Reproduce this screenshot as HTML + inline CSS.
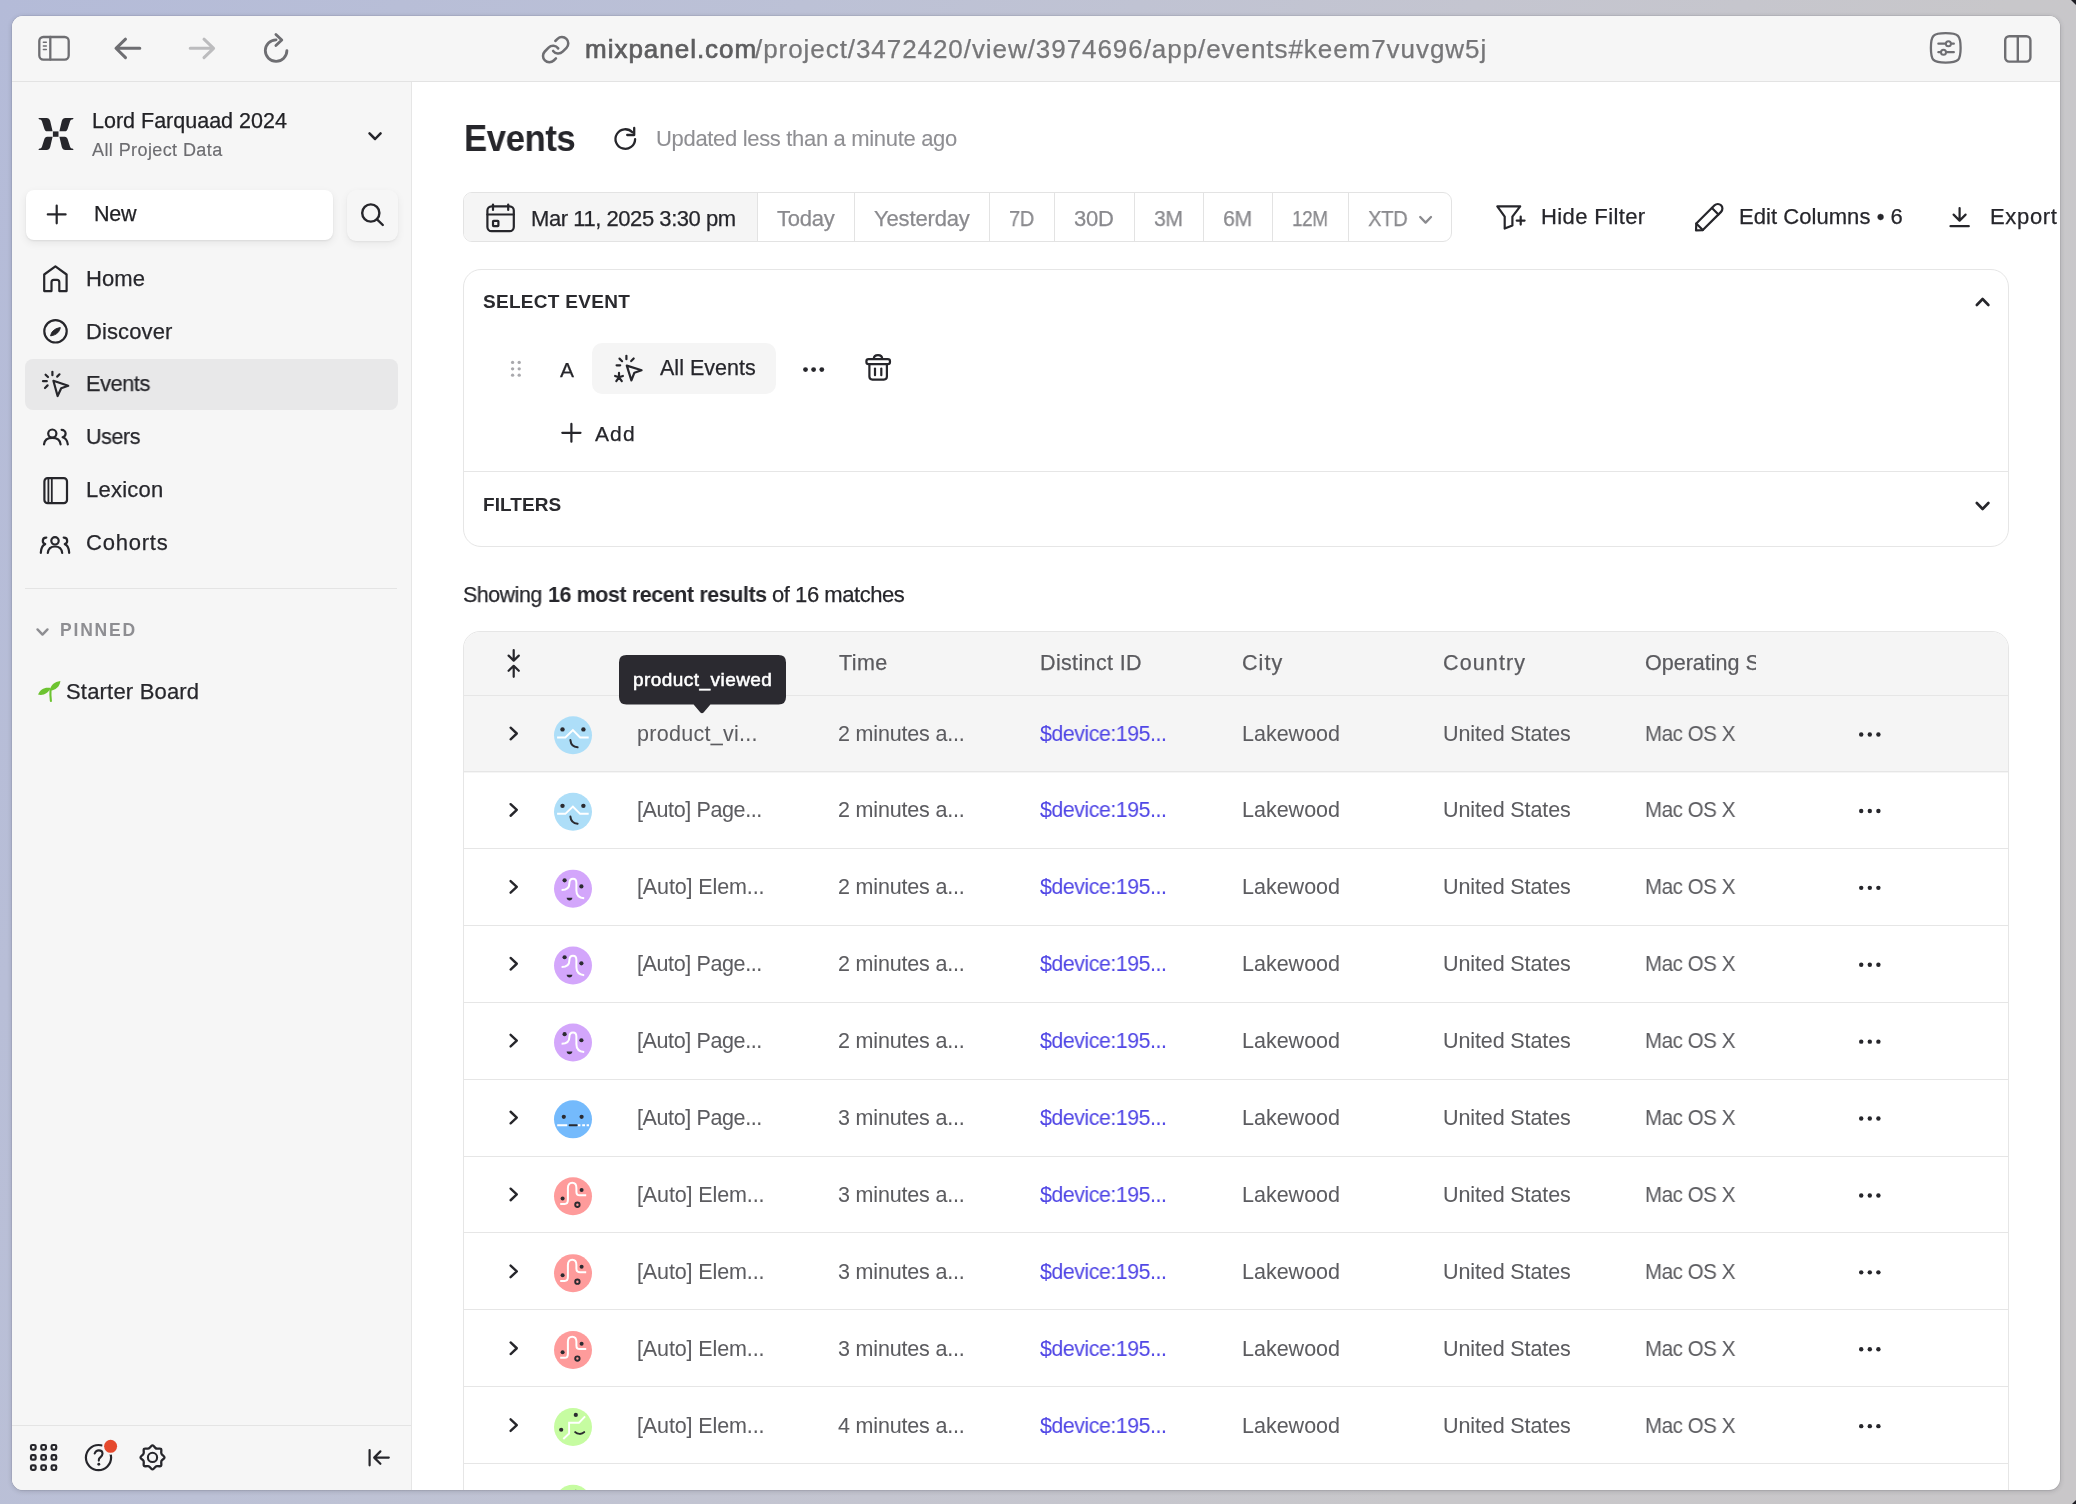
<!DOCTYPE html>
<html><head><meta charset="utf-8"><title>Events - Mixpanel</title>
<style>
html,body{margin:0;padding:0;}
body{width:2076px;height:1504px;position:relative;overflow:hidden;
 background:linear-gradient(112deg,#b4bbd8 0%,#bcc1d6 30%,#c4c5d0 55%,#c8c7ca 75%,#c9c7c9 100%);
 font-family:"Liberation Sans",sans-serif;}
.abs{position:absolute;}
.win{position:absolute;left:12px;top:16px;width:2048px;height:1474px;border-radius:11px;background:#fff;
 box-shadow:0 0 0 0.5px rgba(60,60,70,0.15),0 1px 5px rgba(40,40,50,0.22);}
.clip{position:absolute;left:0;top:0;width:2076px;height:1504px;clip-path:inset(16px 16px 14px 12px round 11px);}
.t{position:absolute;white-space:pre;line-height:1;font-family:"Liberation Sans",sans-serif;will-change:transform;}
svg{position:absolute;left:0;top:0;overflow:visible;}
</style></head><body>
<div class="win"></div>
<div class="clip">

<div class="abs" style="left:12px;top:16px;width:2048px;height:65px;background:#f6f6f6;"></div>
<div class="abs" style="left:12px;top:81px;width:2048px;height:1px;background:#e3e3e3;"></div>
<div class="abs" style="left:12px;top:82px;width:399px;height:1410px;background:#f6f6f6;"></div>
<div class="abs" style="left:411px;top:82px;width:1px;height:1410px;background:#e6e6e6;"></div>
<div class="abs" style="left:26px;top:189.5px;width:307px;height:50.5px;background:#fff;border-radius:8px;box-shadow:0 1px 2px rgba(0,0,0,0.07),0 3px 9px rgba(0,0,0,0.07);"></div>
<div class="abs" style="left:347px;top:189.5px;width:51px;height:51px;background:#f6f6f6;border-radius:9px;box-shadow:0 1px 2px rgba(0,0,0,0.05),0 3px 9px rgba(0,0,0,0.06);"></div>
<div class="abs" style="left:25px;top:359px;width:372.5px;height:50.5px;background:#e8e8e9;border-radius:8px;"></div>
<div class="abs" style="left:25px;top:588px;width:372px;height:1px;background:#e4e4e4;"></div>
<div class="abs" style="left:12px;top:1425px;width:399px;height:1px;background:#e4e4e4;"></div>
<div class="abs" style="left:463px;top:192px;width:987px;height:48px;border:1px solid #e3e3e3;border-radius:9px;background:#fff;overflow:hidden;"><div class="abs" style="left:0;top:0;width:294px;height:48px;background:#f5f5f5;"></div></div>
<div class="abs" style="left:756.8px;top:193px;width:1px;height:48px;background:#e3e3e3;"></div>
<div class="abs" style="left:854px;top:193px;width:1px;height:48px;background:#e3e3e3;"></div>
<div class="abs" style="left:989px;top:193px;width:1px;height:48px;background:#e3e3e3;"></div>
<div class="abs" style="left:1053.7px;top:193px;width:1px;height:48px;background:#e3e3e3;"></div>
<div class="abs" style="left:1133.9px;top:193px;width:1px;height:48px;background:#e3e3e3;"></div>
<div class="abs" style="left:1202.8px;top:193px;width:1px;height:48px;background:#e3e3e3;"></div>
<div class="abs" style="left:1271.9px;top:193px;width:1px;height:48px;background:#e3e3e3;"></div>
<div class="abs" style="left:1348px;top:193px;width:1px;height:48px;background:#e3e3e3;"></div>
<div class="abs" style="left:463px;top:269px;width:1544px;height:276px;border:1px solid #e6e6e6;border-radius:18px;background:#fff;"></div>
<div class="abs" style="left:464px;top:471px;width:1544px;height:1px;background:#e6e6e6;"></div>
<div class="abs" style="left:592.3px;top:343px;width:184.2px;height:50.7px;background:#f5f5f5;border-radius:10px;"></div>
<div class="abs" style="left:463px;top:631px;width:1544px;height:1000px;border:1px solid #e6e6e6;border-radius:17px 17px 0 0;background:#fff;overflow:hidden;"><div class="abs" style="left:0;top:0;width:1544px;height:64.5px;background:#f5f5f5;"></div><div class="abs" style="left:0;top:64.5px;width:1544px;height:76px;background:#f5f5f5;"></div></div>
<div class="abs" style="left:464px;top:695px;width:1544px;height:1px;background:#e6e6e6;"></div>
<div class="abs" style="left:464px;top:771px;width:1544px;height:1px;background:#e6e6e6;"></div>
<div class="abs" style="left:464px;top:847.9px;width:1544px;height:1px;background:#e6e6e6;"></div>
<div class="abs" style="left:464px;top:924.8px;width:1544px;height:1px;background:#e6e6e6;"></div>
<div class="abs" style="left:464px;top:1001.7px;width:1544px;height:1px;background:#e6e6e6;"></div>
<div class="abs" style="left:464px;top:1078.6px;width:1544px;height:1px;background:#e6e6e6;"></div>
<div class="abs" style="left:464px;top:1155.5px;width:1544px;height:1px;background:#e6e6e6;"></div>
<div class="abs" style="left:464px;top:1232.4px;width:1544px;height:1px;background:#e6e6e6;"></div>
<div class="abs" style="left:464px;top:1309.3px;width:1544px;height:1px;background:#e6e6e6;"></div>
<div class="abs" style="left:464px;top:1386.2px;width:1544px;height:1px;background:#e6e6e6;"></div>
<div class="abs" style="left:464px;top:1463.1px;width:1544px;height:1px;background:#e6e6e6;"></div>
<div class="abs" style="left:464px;top:1540px;width:1544px;height:1px;background:#e6e6e6;"></div>
<div class="t" style="left:585.3px;top:36.39px;font-size:26px;color:#5d5d5f;letter-spacing:0.981px;-webkit-text-stroke:0.7px #5d5d5f;">mixpanel.com</div><div class="t" style="left:755.3px;top:36.39px;font-size:26px;color:#767678;letter-spacing:0.941px;-webkit-text-stroke:0.25px #767678;">/project/3472420/view/3974696/app/events#keem7vuvgw5j</div><div class="t" style="left:92.3px;top:111.1px;font-size:21.5px;color:#222226;-webkit-text-stroke:0.25px #222226;">Lord Farquaad 2024</div><div class="t" style="left:91.8px;top:140.76px;font-size:18px;color:#6c6c70;letter-spacing:0.409px;-webkit-text-stroke:0.15px #6c6c70;">All Project Data</div><div class="t" style="left:94px;top:204.2px;font-size:21.5px;color:#222226;letter-spacing:-0.258px;-webkit-text-stroke:0.25px #222226;">New</div><div class="t" style="left:86.3px;top:267.78px;font-size:22px;color:#27272c;letter-spacing:0.104px;-webkit-text-stroke:0.25px #27272c;">Home</div><div class="t" style="left:86.3px;top:320.58px;font-size:22px;color:#27272c;letter-spacing:0.103px;-webkit-text-stroke:0.25px #27272c;">Discover</div><div class="t" style="left:86.3px;top:373.48px;font-size:22px;color:#27272c;letter-spacing:-0.450px;transform:scaleX(0.9905);transform-origin:0 0;-webkit-text-stroke:0.25px #27272c;">Events</div><div class="t" style="left:86.3px;top:426.48px;font-size:22px;color:#27272c;letter-spacing:-0.450px;transform:scaleX(0.9775);transform-origin:0 0;-webkit-text-stroke:0.25px #27272c;">Users</div><div class="t" style="left:86.3px;top:478.98px;font-size:22px;color:#27272c;letter-spacing:0.243px;-webkit-text-stroke:0.25px #27272c;">Lexicon</div><div class="t" style="left:86.3px;top:531.78px;font-size:22px;color:#27272c;letter-spacing:0.776px;-webkit-text-stroke:0.25px #27272c;">Cohorts</div><div class="t" style="left:60.3px;top:621.59px;font-size:17.5px;color:#8e8e92;font-weight:700;letter-spacing:1.815px;">PINNED</div><div class="t" style="left:66px;top:680.78px;font-size:22px;color:#27272c;letter-spacing:0.188px;-webkit-text-stroke:0.25px #27272c;">Starter Board</div><div class="t" style="left:464.3px;top:121.33px;font-size:36px;color:#26262b;font-weight:700;letter-spacing:-0.450px;transform:scaleX(0.9645);transform-origin:0 0;">Events</div><div class="t" style="left:656.3px;top:128.38px;font-size:22px;color:#8f8f93;letter-spacing:-0.326px;-webkit-text-stroke:0.1px #8f8f93;">Updated less than a minute ago</div><div class="t" style="left:531.3px;top:208.28px;font-size:22px;color:#26262b;letter-spacing:-0.443px;-webkit-text-stroke:0.25px #26262b;">Mar 11, 2025 3:30 pm</div><div class="t" style="left:776.7px;top:207.58px;font-size:22px;color:#8a8a8e;letter-spacing:-0.230px;-webkit-text-stroke:0.25px #8a8a8e;">Today</div><div class="t" style="left:873.9px;top:207.58px;font-size:22px;color:#8a8a8e;letter-spacing:-0.156px;-webkit-text-stroke:0.25px #8a8a8e;">Yesterday</div><div class="t" style="left:1008.7px;top:207.58px;font-size:22px;color:#8a8a8e;letter-spacing:-0.450px;transform:scaleX(0.9142);transform-origin:0 0;-webkit-text-stroke:0.25px #8a8a8e;">7D</div><div class="t" style="left:1074.3px;top:207.58px;font-size:22px;color:#8a8a8e;letter-spacing:-0.230px;-webkit-text-stroke:0.25px #8a8a8e;">30D</div><div class="t" style="left:1154.3px;top:207.58px;font-size:22px;color:#8a8a8e;letter-spacing:-0.450px;transform:scaleX(0.9631);transform-origin:0 0;-webkit-text-stroke:0.25px #8a8a8e;">3M</div><div class="t" style="left:1223px;top:207.58px;font-size:22px;color:#8a8a8e;letter-spacing:-0.450px;transform:scaleX(0.9697);transform-origin:0 0;-webkit-text-stroke:0.25px #8a8a8e;">6M</div><div class="t" style="left:1291.9px;top:207.58px;font-size:22px;color:#8a8a8e;letter-spacing:-0.450px;transform:scaleX(0.8616);transform-origin:0 0;-webkit-text-stroke:0.25px #8a8a8e;">12M</div><div class="t" style="left:1368.3px;top:207.58px;font-size:22px;color:#8a8a8e;letter-spacing:-0.450px;transform:scaleX(0.9211);transform-origin:0 0;-webkit-text-stroke:0.25px #8a8a8e;">XTD</div><div class="t" style="left:1540.8px;top:206.18px;font-size:22px;color:#26262b;letter-spacing:0.395px;-webkit-text-stroke:0.25px #26262b;">Hide Filter</div><div class="t" style="left:1739.3px;top:206.18px;font-size:22px;color:#26262b;letter-spacing:0.053px;-webkit-text-stroke:0.25px #26262b;">Edit Columns • 6</div><div class="t" style="left:1990.3px;top:206.18px;font-size:22px;color:#26262b;letter-spacing:0.661px;-webkit-text-stroke:0.25px #26262b;">Export</div><div class="t" style="left:483.3px;top:291.72px;font-size:19px;color:#2a2a2e;font-weight:700;letter-spacing:0.293px;">SELECT EVENT</div><div class="t" style="left:483.3px;top:494.82px;font-size:19px;color:#2a2a2e;font-weight:700;letter-spacing:0.072px;">FILTERS</div><div class="t" style="left:559.5px;top:358.62px;font-size:21px;color:#26262b;-webkit-text-stroke:0.25px #26262b;">A</div><div class="t" style="left:660.3px;top:358.2px;font-size:21.5px;color:#26262b;letter-spacing:0.021px;-webkit-text-stroke:0.25px #26262b;">All Events</div><div class="t" style="left:595.3px;top:422.82px;font-size:21px;color:#26262b;letter-spacing:1.113px;-webkit-text-stroke:0.25px #26262b;">Add</div><div class="t" style="left:463px;top:583.58px;font-size:22px;color:#26262b;letter-spacing:-0.450px;transform:scaleX(0.9695);transform-origin:0 0;-webkit-text-stroke:0.25px #26262b;">Showing</div><div class="t" style="left:548.3px;top:583.58px;font-size:22px;color:#26262b;font-weight:700;letter-spacing:-0.450px;transform:scaleX(0.9781);transform-origin:0 0;">16 most recent results</div><div class="t" style="left:772.3px;top:583.58px;font-size:22px;color:#26262b;letter-spacing:-0.450px;-webkit-text-stroke:0.25px #26262b;">of 16 matches</div><div class="t" style="left:838.9px;top:653.4px;font-size:21.5px;color:#5b5b5f;letter-spacing:0.405px;-webkit-text-stroke:0.25px #5b5b5f;">Time</div><div class="t" style="left:1040.3px;top:653.4px;font-size:21.5px;color:#5b5b5f;letter-spacing:0.353px;-webkit-text-stroke:0.25px #5b5b5f;">Distinct ID</div><div class="t" style="left:1241.7px;top:653.4px;font-size:21.5px;color:#5b5b5f;letter-spacing:1.056px;-webkit-text-stroke:0.25px #5b5b5f;">City</div><div class="t" style="left:1443.2px;top:653.4px;font-size:21.5px;color:#5b5b5f;letter-spacing:1.134px;-webkit-text-stroke:0.25px #5b5b5f;">Country</div><div class="t" style="left:1645.3px;top:653.4px;font-size:21.5px;color:#5b5b5f;-webkit-text-stroke:0.25px #5b5b5f;clip-path:inset(-10px 0 -10px 0);width:111px;overflow:hidden;">Operating System</div><div class="t" style="left:637px;top:724px;font-size:21.5px;color:#5c5c60;letter-spacing:0.281px;-webkit-text-stroke:0.05px #5c5c60;">product_vi...</div><div class="t" style="left:838.1px;top:724px;font-size:21.5px;color:#5c5c60;letter-spacing:-0.175px;-webkit-text-stroke:0.05px #5c5c60;">2 minutes a...</div><div class="t" style="left:1040.3px;top:724px;font-size:21.5px;color:#5046e5;letter-spacing:-0.450px;transform:scaleX(0.9912);transform-origin:0 0;-webkit-text-stroke:0.05px #5046e5;">$device:195...</div><div class="t" style="left:1241.7px;top:724px;font-size:21.5px;color:#5c5c60;-webkit-text-stroke:0.05px #5c5c60;">Lakewood</div><div class="t" style="left:1443.2px;top:724px;font-size:21.5px;color:#5c5c60;letter-spacing:-0.107px;-webkit-text-stroke:0.05px #5c5c60;">United States</div><div class="t" style="left:1645.3px;top:724px;font-size:21.5px;color:#5c5c60;letter-spacing:-0.450px;transform:scaleX(0.9534);transform-origin:0 0;-webkit-text-stroke:0.05px #5c5c60;">Mac OS X</div><div class="t" style="left:637px;top:800.45px;font-size:21.5px;color:#5c5c60;letter-spacing:-0.383px;-webkit-text-stroke:0.05px #5c5c60;">[Auto] Page...</div><div class="t" style="left:838.1px;top:800.45px;font-size:21.5px;color:#5c5c60;letter-spacing:-0.175px;-webkit-text-stroke:0.05px #5c5c60;">2 minutes a...</div><div class="t" style="left:1040.3px;top:800.45px;font-size:21.5px;color:#5046e5;letter-spacing:-0.450px;transform:scaleX(0.9912);transform-origin:0 0;-webkit-text-stroke:0.05px #5046e5;">$device:195...</div><div class="t" style="left:1241.7px;top:800.45px;font-size:21.5px;color:#5c5c60;-webkit-text-stroke:0.05px #5c5c60;">Lakewood</div><div class="t" style="left:1443.2px;top:800.45px;font-size:21.5px;color:#5c5c60;letter-spacing:-0.107px;-webkit-text-stroke:0.05px #5c5c60;">United States</div><div class="t" style="left:1645.3px;top:800.45px;font-size:21.5px;color:#5c5c60;letter-spacing:-0.450px;transform:scaleX(0.9534);transform-origin:0 0;-webkit-text-stroke:0.05px #5c5c60;">Mac OS X</div><div class="t" style="left:637px;top:877.35px;font-size:21.5px;color:#5c5c60;letter-spacing:-0.120px;-webkit-text-stroke:0.05px #5c5c60;">[Auto] Elem...</div><div class="t" style="left:838.1px;top:877.35px;font-size:21.5px;color:#5c5c60;letter-spacing:-0.175px;-webkit-text-stroke:0.05px #5c5c60;">2 minutes a...</div><div class="t" style="left:1040.3px;top:877.35px;font-size:21.5px;color:#5046e5;letter-spacing:-0.450px;transform:scaleX(0.9912);transform-origin:0 0;-webkit-text-stroke:0.05px #5046e5;">$device:195...</div><div class="t" style="left:1241.7px;top:877.35px;font-size:21.5px;color:#5c5c60;-webkit-text-stroke:0.05px #5c5c60;">Lakewood</div><div class="t" style="left:1443.2px;top:877.35px;font-size:21.5px;color:#5c5c60;letter-spacing:-0.107px;-webkit-text-stroke:0.05px #5c5c60;">United States</div><div class="t" style="left:1645.3px;top:877.35px;font-size:21.5px;color:#5c5c60;letter-spacing:-0.450px;transform:scaleX(0.9534);transform-origin:0 0;-webkit-text-stroke:0.05px #5c5c60;">Mac OS X</div><div class="t" style="left:637px;top:954.25px;font-size:21.5px;color:#5c5c60;letter-spacing:-0.383px;-webkit-text-stroke:0.05px #5c5c60;">[Auto] Page...</div><div class="t" style="left:838.1px;top:954.25px;font-size:21.5px;color:#5c5c60;letter-spacing:-0.175px;-webkit-text-stroke:0.05px #5c5c60;">2 minutes a...</div><div class="t" style="left:1040.3px;top:954.25px;font-size:21.5px;color:#5046e5;letter-spacing:-0.450px;transform:scaleX(0.9912);transform-origin:0 0;-webkit-text-stroke:0.05px #5046e5;">$device:195...</div><div class="t" style="left:1241.7px;top:954.25px;font-size:21.5px;color:#5c5c60;-webkit-text-stroke:0.05px #5c5c60;">Lakewood</div><div class="t" style="left:1443.2px;top:954.25px;font-size:21.5px;color:#5c5c60;letter-spacing:-0.107px;-webkit-text-stroke:0.05px #5c5c60;">United States</div><div class="t" style="left:1645.3px;top:954.25px;font-size:21.5px;color:#5c5c60;letter-spacing:-0.450px;transform:scaleX(0.9534);transform-origin:0 0;-webkit-text-stroke:0.05px #5c5c60;">Mac OS X</div><div class="t" style="left:637px;top:1031.15px;font-size:21.5px;color:#5c5c60;letter-spacing:-0.383px;-webkit-text-stroke:0.05px #5c5c60;">[Auto] Page...</div><div class="t" style="left:838.1px;top:1031.15px;font-size:21.5px;color:#5c5c60;letter-spacing:-0.175px;-webkit-text-stroke:0.05px #5c5c60;">2 minutes a...</div><div class="t" style="left:1040.3px;top:1031.15px;font-size:21.5px;color:#5046e5;letter-spacing:-0.450px;transform:scaleX(0.9912);transform-origin:0 0;-webkit-text-stroke:0.05px #5046e5;">$device:195...</div><div class="t" style="left:1241.7px;top:1031.15px;font-size:21.5px;color:#5c5c60;-webkit-text-stroke:0.05px #5c5c60;">Lakewood</div><div class="t" style="left:1443.2px;top:1031.15px;font-size:21.5px;color:#5c5c60;letter-spacing:-0.107px;-webkit-text-stroke:0.05px #5c5c60;">United States</div><div class="t" style="left:1645.3px;top:1031.15px;font-size:21.5px;color:#5c5c60;letter-spacing:-0.450px;transform:scaleX(0.9534);transform-origin:0 0;-webkit-text-stroke:0.05px #5c5c60;">Mac OS X</div><div class="t" style="left:637px;top:1108.05px;font-size:21.5px;color:#5c5c60;letter-spacing:-0.383px;-webkit-text-stroke:0.05px #5c5c60;">[Auto] Page...</div><div class="t" style="left:838.1px;top:1108.05px;font-size:21.5px;color:#5c5c60;letter-spacing:-0.175px;-webkit-text-stroke:0.05px #5c5c60;">3 minutes a...</div><div class="t" style="left:1040.3px;top:1108.05px;font-size:21.5px;color:#5046e5;letter-spacing:-0.450px;transform:scaleX(0.9912);transform-origin:0 0;-webkit-text-stroke:0.05px #5046e5;">$device:195...</div><div class="t" style="left:1241.7px;top:1108.05px;font-size:21.5px;color:#5c5c60;-webkit-text-stroke:0.05px #5c5c60;">Lakewood</div><div class="t" style="left:1443.2px;top:1108.05px;font-size:21.5px;color:#5c5c60;letter-spacing:-0.107px;-webkit-text-stroke:0.05px #5c5c60;">United States</div><div class="t" style="left:1645.3px;top:1108.05px;font-size:21.5px;color:#5c5c60;letter-spacing:-0.450px;transform:scaleX(0.9534);transform-origin:0 0;-webkit-text-stroke:0.05px #5c5c60;">Mac OS X</div><div class="t" style="left:637px;top:1184.95px;font-size:21.5px;color:#5c5c60;letter-spacing:-0.120px;-webkit-text-stroke:0.05px #5c5c60;">[Auto] Elem...</div><div class="t" style="left:838.1px;top:1184.95px;font-size:21.5px;color:#5c5c60;letter-spacing:-0.175px;-webkit-text-stroke:0.05px #5c5c60;">3 minutes a...</div><div class="t" style="left:1040.3px;top:1184.95px;font-size:21.5px;color:#5046e5;letter-spacing:-0.450px;transform:scaleX(0.9912);transform-origin:0 0;-webkit-text-stroke:0.05px #5046e5;">$device:195...</div><div class="t" style="left:1241.7px;top:1184.95px;font-size:21.5px;color:#5c5c60;-webkit-text-stroke:0.05px #5c5c60;">Lakewood</div><div class="t" style="left:1443.2px;top:1184.95px;font-size:21.5px;color:#5c5c60;letter-spacing:-0.107px;-webkit-text-stroke:0.05px #5c5c60;">United States</div><div class="t" style="left:1645.3px;top:1184.95px;font-size:21.5px;color:#5c5c60;letter-spacing:-0.450px;transform:scaleX(0.9534);transform-origin:0 0;-webkit-text-stroke:0.05px #5c5c60;">Mac OS X</div><div class="t" style="left:637px;top:1261.85px;font-size:21.5px;color:#5c5c60;letter-spacing:-0.120px;-webkit-text-stroke:0.05px #5c5c60;">[Auto] Elem...</div><div class="t" style="left:838.1px;top:1261.85px;font-size:21.5px;color:#5c5c60;letter-spacing:-0.175px;-webkit-text-stroke:0.05px #5c5c60;">3 minutes a...</div><div class="t" style="left:1040.3px;top:1261.85px;font-size:21.5px;color:#5046e5;letter-spacing:-0.450px;transform:scaleX(0.9912);transform-origin:0 0;-webkit-text-stroke:0.05px #5046e5;">$device:195...</div><div class="t" style="left:1241.7px;top:1261.85px;font-size:21.5px;color:#5c5c60;-webkit-text-stroke:0.05px #5c5c60;">Lakewood</div><div class="t" style="left:1443.2px;top:1261.85px;font-size:21.5px;color:#5c5c60;letter-spacing:-0.107px;-webkit-text-stroke:0.05px #5c5c60;">United States</div><div class="t" style="left:1645.3px;top:1261.85px;font-size:21.5px;color:#5c5c60;letter-spacing:-0.450px;transform:scaleX(0.9534);transform-origin:0 0;-webkit-text-stroke:0.05px #5c5c60;">Mac OS X</div><div class="t" style="left:637px;top:1338.75px;font-size:21.5px;color:#5c5c60;letter-spacing:-0.120px;-webkit-text-stroke:0.05px #5c5c60;">[Auto] Elem...</div><div class="t" style="left:838.1px;top:1338.75px;font-size:21.5px;color:#5c5c60;letter-spacing:-0.175px;-webkit-text-stroke:0.05px #5c5c60;">3 minutes a...</div><div class="t" style="left:1040.3px;top:1338.75px;font-size:21.5px;color:#5046e5;letter-spacing:-0.450px;transform:scaleX(0.9912);transform-origin:0 0;-webkit-text-stroke:0.05px #5046e5;">$device:195...</div><div class="t" style="left:1241.7px;top:1338.75px;font-size:21.5px;color:#5c5c60;-webkit-text-stroke:0.05px #5c5c60;">Lakewood</div><div class="t" style="left:1443.2px;top:1338.75px;font-size:21.5px;color:#5c5c60;letter-spacing:-0.107px;-webkit-text-stroke:0.05px #5c5c60;">United States</div><div class="t" style="left:1645.3px;top:1338.75px;font-size:21.5px;color:#5c5c60;letter-spacing:-0.450px;transform:scaleX(0.9534);transform-origin:0 0;-webkit-text-stroke:0.05px #5c5c60;">Mac OS X</div><div class="t" style="left:637px;top:1415.65px;font-size:21.5px;color:#5c5c60;letter-spacing:-0.120px;-webkit-text-stroke:0.05px #5c5c60;">[Auto] Elem...</div><div class="t" style="left:838.1px;top:1415.65px;font-size:21.5px;color:#5c5c60;letter-spacing:-0.175px;-webkit-text-stroke:0.05px #5c5c60;">4 minutes a...</div><div class="t" style="left:1040.3px;top:1415.65px;font-size:21.5px;color:#5046e5;letter-spacing:-0.450px;transform:scaleX(0.9912);transform-origin:0 0;-webkit-text-stroke:0.05px #5046e5;">$device:195...</div><div class="t" style="left:1241.7px;top:1415.65px;font-size:21.5px;color:#5c5c60;-webkit-text-stroke:0.05px #5c5c60;">Lakewood</div><div class="t" style="left:1443.2px;top:1415.65px;font-size:21.5px;color:#5c5c60;letter-spacing:-0.107px;-webkit-text-stroke:0.05px #5c5c60;">United States</div><div class="t" style="left:1645.3px;top:1415.65px;font-size:21.5px;color:#5c5c60;letter-spacing:-0.450px;transform:scaleX(0.9534);transform-origin:0 0;-webkit-text-stroke:0.05px #5c5c60;">Mac OS X</div><div class="t" style="left:637px;top:1492.55px;font-size:21.5px;color:#5c5c60;letter-spacing:-0.120px;-webkit-text-stroke:0.05px #5c5c60;">[Auto] Elem...</div><div class="t" style="left:838.1px;top:1492.55px;font-size:21.5px;color:#5c5c60;letter-spacing:-0.175px;-webkit-text-stroke:0.05px #5c5c60;">4 minutes a...</div><div class="t" style="left:1040.3px;top:1492.55px;font-size:21.5px;color:#5046e5;letter-spacing:-0.450px;transform:scaleX(0.9912);transform-origin:0 0;-webkit-text-stroke:0.05px #5046e5;">$device:195...</div><div class="t" style="left:1241.7px;top:1492.55px;font-size:21.5px;color:#5c5c60;-webkit-text-stroke:0.05px #5c5c60;">Lakewood</div><div class="t" style="left:1443.2px;top:1492.55px;font-size:21.5px;color:#5c5c60;letter-spacing:-0.107px;-webkit-text-stroke:0.05px #5c5c60;">United States</div><div class="t" style="left:1645.3px;top:1492.55px;font-size:21.5px;color:#5c5c60;letter-spacing:-0.450px;transform:scaleX(0.9534);transform-origin:0 0;-webkit-text-stroke:0.05px #5c5c60;">Mac OS X</div>
<svg width="2076" height="1504" viewBox="0 0 2076 1504"><g fill="none" stroke="#6e6e72" stroke-width="2.3" stroke-linecap="round" stroke-linejoin="round"><rect x="39.3" y="37" width="29.4" height="22.6" rx="4"/><line x1="50.3" y1="37" x2="50.3" y2="59.6"/></g><g stroke="#6e6e72" stroke-width="1.5" stroke-linecap="round"><line x1="43.4" y1="42.2" x2="46.3" y2="42.2"/><line x1="43.4" y1="45.9" x2="46.3" y2="45.9"/><line x1="43.4" y1="49.5" x2="46.3" y2="49.5"/></g><path d="M125.5 39.2 L116 48.3 L125.5 57.6 M116.5 48.3 L139.8 48.3" fill="none" stroke="#6e6e72" stroke-width="3" stroke-linecap="round" stroke-linejoin="round"/><path d="M204 39.2 L213.6 48.3 L204 57.6 M190.2 48.3 L213 48.3" fill="none" stroke="#bcbcbe" stroke-width="3" stroke-linecap="round" stroke-linejoin="round"/><path d="M276.1 39.8 A10.8 10.8 0 1 0 286.9 50.6" fill="none" stroke="#6e6e72" stroke-width="2.8" stroke-linecap="round"/><path d="M275.9 34.4 L281.8 40.1 L275.9 45.6" fill="none" stroke="#6e6e72" stroke-width="2.8" stroke-linecap="round" stroke-linejoin="round"/><g transform="translate(540.4 34.4) scale(1.27)" fill="none" stroke="#6e6e72" stroke-width="2" stroke-linecap="round" stroke-linejoin="round"><path d="M10 13a5 5 0 0 0 7.54.54l3-3a5 5 0 0 0-7.07-7.07l-1.72 1.71"/><path d="M14 11a5 5 0 0 0-7.54-.54l-3 3a5 5 0 0 0 7.07 7.07l1.71-1.71"/></g><g fill="none" stroke="#6e6e72" stroke-width="2.3" stroke-linecap="round"><path d="M1945.7 33.2 C1958.5 33.2 1960.6 35.5 1960.6 47.9 C1960.6 60.3 1958.5 62.6 1945.7 62.6 C1932.9 62.6 1930.9 60.3 1930.9 47.9 C1930.9 35.5 1932.9 33.2 1945.7 33.2 Z"/><line x1="1938.4" y1="43.7" x2="1953.8" y2="43.7"/><line x1="1938.4" y1="52.2" x2="1953.8" y2="52.2"/></g><circle cx="1948.4" cy="43.7" r="2.5" fill="#f6f6f6" stroke="#6e6e72" stroke-width="2"/><circle cx="1943.5" cy="52.2" r="2.5" fill="#f6f6f6" stroke="#6e6e72" stroke-width="2"/><g fill="none" stroke="#6e6e72" stroke-width="2.4"><rect x="2005.2" y="36.2" width="25.2" height="25.4" rx="4"/><line x1="2017.8" y1="36.2" x2="2017.8" y2="61.6"/></g><g transform="translate(34 112)"><path transform="" d="M4.3 6 L12.6 6 C14.5 6 15.6 7.2 16.2 9 L18.6 19.3 L13.3 19.3 C11.7 19.3 10.8 18.3 10.3 16.7 L8 9.4 C7.5 7.9 6.8 7.4 5.4 7.4 Z" fill="#26262b"/><path transform="translate(44 0) scale(-1 1)" d="M4.3 6 L12.6 6 C14.5 6 15.6 7.2 16.2 9 L18.6 19.3 L13.3 19.3 C11.7 19.3 10.8 18.3 10.3 16.7 L8 9.4 C7.5 7.9 6.8 7.4 5.4 7.4 Z" fill="#26262b"/><path transform="translate(0 44) scale(1 -1)" d="M4.3 6 L12.6 6 C14.5 6 15.6 7.2 16.2 9 L18.6 19.3 L13.3 19.3 C11.7 19.3 10.8 18.3 10.3 16.7 L8 9.4 C7.5 7.9 6.8 7.4 5.4 7.4 Z" fill="#26262b"/><path transform="translate(44 44) scale(-1 -1)" d="M4.3 6 L12.6 6 C14.5 6 15.6 7.2 16.2 9 L18.6 19.3 L13.3 19.3 C11.7 19.3 10.8 18.3 10.3 16.7 L8 9.4 C7.5 7.9 6.8 7.4 5.4 7.4 Z" fill="#26262b"/><rect x="18.9" y="19.4" width="5.6" height="5.4" fill="#26262b"/></g><path d="M369.5 133.3 L375.1 139 L380.6 133.3" fill="none" stroke="#26262b" stroke-width="2.5" stroke-linecap="round" stroke-linejoin="round"/><path d="M47.8 214.4 L65.6 214.4 M56.7 205.6 L56.7 223.3" stroke="#26262b" stroke-width="2.2" stroke-linecap="round"/><g fill="none" stroke="#26262b" stroke-width="2.4" stroke-linecap="round"><circle cx="370.8" cy="213" r="8.6"/><line x1="377" y1="219.3" x2="382.8" y2="225"/></g><path fill="none" stroke="#26262b" stroke-width="2.2" stroke-linecap="round" stroke-linejoin="round" d="M44.2 291.1 L44.2 274.5 L55.4 266.4 L66.6 274.5 L66.6 291.1 L59.3 291.1 L59.3 282.3 C59.3 280.6 58.4 279.9 57 279.9 L53.8 279.9 C52.4 279.9 51.5 280.6 51.5 282.3 L51.5 291.1 Z"/><circle fill="none" stroke="#26262b" stroke-width="2.2" stroke-linecap="round" stroke-linejoin="round" cx="55.5" cy="331.3" r="11.2"/><path d="M50.6 335.9 C51.4 332 53.6 328.8 60.3 327.6 C59.5 331.5 57.3 334.7 50.6 335.9 Z" fill="#26262b" stroke="#26262b" stroke-width="1"/><g fill="none" stroke="#26262b" stroke-width="2.2" stroke-linecap="round" stroke-linejoin="round"><line x1="52.4" y1="371.8" x2="52.4" y2="375.2"/><line x1="45.6" y1="374.7" x2="48" y2="377"/><line x1="59.5" y1="374.3" x2="57.2" y2="376.6"/><line x1="43" y1="381.2" x2="46.8" y2="381.2"/><line x1="45" y1="388" x2="47.6" y2="385.4"/><path d="M53.4 380.8 L68.2 385.8 L61.2 388.3 L57.6 396 Z"/></g><g fill="none" stroke="#26262b" stroke-width="2.2" stroke-linecap="round" stroke-linejoin="round"><circle cx="52.3" cy="433.6" r="4.1"/><path d="M44 444.3 C44.6 439.8 47.9 437.9 52.3 437.9 C56.7 437.9 60 439.8 60.6 444.3"/><path d="M61.6 429.8 C64 429.8 65.6 431.5 65.6 433.6 C65.6 435.3 64.3 436.8 62.6 437.3 C65.5 438.2 67.3 440.6 67.8 444.3"/></g><g fill="none" stroke="#26262b" stroke-width="2.2" stroke-linecap="round" stroke-linejoin="round"><rect x="44.4" y="478.2" width="22.6" height="25" rx="3.2"/><line x1="48.4" y1="478.6" x2="48.4" y2="502.8" stroke-width="1.8"/><line x1="51.8" y1="478.6" x2="51.8" y2="502.8" stroke-width="1.8"/></g><g fill="none" stroke="#26262b" stroke-width="2.2" stroke-linecap="round" stroke-linejoin="round" stroke-width="2"><circle cx="55" cy="540.8" r="3.7"/><path d="M47.8 553 C48.3 548.5 51.2 546.5 55 546.5 C58.8 546.5 61.7 548.5 62.2 553"/><path d="M63.7 537.6 C65.8 537.6 67.2 539.1 67.2 540.9 C67.2 542.3 66.2 543.6 64.8 544.1 C67.2 544.9 68.8 547.1 69.2 552.8"/><path d="M46.3 537.6 C44.2 537.6 42.8 539.1 42.8 540.9 C42.8 542.3 43.8 543.6 45.2 544.1 C42.8 544.9 41.2 547.1 40.8 552.8"/></g><path d="M37.5 629.4 L42.5 634.6 L47.5 629.4" fill="none" stroke="#8e8e92" stroke-width="2.4" stroke-linecap="round" stroke-linejoin="round"/><g><path d="M50.9 701 C50.5 697.5 50.2 693.5 50.5 689.8" fill="none" stroke="#6cc330" stroke-width="2.1" stroke-linecap="round"/><path d="M38 694.6 C40 689.4 45 686.6 50.6 688 C48.6 693 43.4 696 38 694.6 Z" fill="#6cc330"/><path d="M49.8 690.6 C50.4 685.2 54.4 681.6 60.4 680.9 C59.9 686.4 55.6 690.3 49.8 690.6 Z" fill="#6cc330"/></g><g fill="none" stroke="#26262b" stroke-width="2.2"><rect x="31" y="1445" width="4.6" height="4.6" rx="1.3"/><rect x="31" y="1455.1" width="4.6" height="4.6" rx="1.3"/><rect x="31" y="1465.3" width="4.6" height="4.6" rx="1.3"/><rect x="41.3" y="1445" width="4.6" height="4.6" rx="1.3"/><rect x="41.3" y="1455.1" width="4.6" height="4.6" rx="1.3"/><rect x="41.3" y="1465.3" width="4.6" height="4.6" rx="1.3"/><rect x="51.6" y="1445" width="4.6" height="4.6" rx="1.3"/><rect x="51.6" y="1455.1" width="4.6" height="4.6" rx="1.3"/><rect x="51.6" y="1465.3" width="4.6" height="4.6" rx="1.3"/></g><circle cx="98.5" cy="1457.6" r="12.6" fill="none" stroke="#26262b" stroke-width="2.2"/><path d="M94.7 1453.5 C95.5 1451.3 97 1450.4 98.8 1450.4 C101.1 1450.4 102.5 1451.9 102.5 1453.8 C102.5 1455.9 100.8 1456.9 99.6 1458.1 C98.9 1458.8 98.8 1459.5 98.8 1460.6" fill="none" stroke="#26262b" stroke-width="2.1" stroke-linecap="round"/><circle cx="98.8" cy="1464.3" r="1.45" fill="#26262b"/><circle cx="110.6" cy="1446.3" r="8.4" fill="#f6f6f6"/><circle cx="110.6" cy="1446.3" r="6.5" fill="#e5492d"/><path d="M151.35 1446.05 Q152.50 1444.80 153.65 1446.05 L155.31 1447.85 Q156.10 1448.72 157.27 1448.67 L159.71 1448.56 Q161.41 1448.49 161.34 1450.19 L161.23 1452.63 Q161.18 1453.80 162.05 1454.59 L163.85 1456.25 Q165.10 1457.40 163.85 1458.55 L162.05 1460.21 Q161.18 1461.00 161.23 1462.17 L161.34 1464.61 Q161.41 1466.31 159.71 1466.24 L157.27 1466.13 Q156.10 1466.08 155.31 1466.95 L153.65 1468.75 Q152.50 1470.00 151.35 1468.75 L149.69 1466.95 Q148.90 1466.08 147.73 1466.13 L145.29 1466.24 Q143.59 1466.31 143.66 1464.61 L143.77 1462.17 Q143.82 1461.00 142.95 1460.21 L141.15 1458.55 Q139.90 1457.40 141.15 1456.25 L142.95 1454.59 Q143.82 1453.80 143.77 1452.63 L143.66 1450.19 Q143.59 1448.49 145.29 1448.56 L147.73 1448.67 Q148.90 1448.72 149.69 1447.85 Z" fill="none" stroke="#26262b" stroke-width="2.3" stroke-linejoin="round"/><circle cx="152.5" cy="1457.4" r="4.6" fill="none" stroke="#26262b" stroke-width="2.1"/><g fill="none" stroke="#26262b" stroke-width="2.2" stroke-linecap="round" stroke-linejoin="round"><line x1="369.6" y1="1450" x2="369.6" y2="1465.3"/><path d="M388.8 1457.6 L374.2 1457.6 M380.4 1451.4 L374.2 1457.6 L380.4 1463.8"/></g><path d="M632.4 132.3 A9.8 9.8 0 1 0 635.1 139.2" fill="none" stroke="#26262b" stroke-width="2.3" stroke-linecap="round"/><path d="M634.2 128 L634.2 135 L627.2 135" fill="none" stroke="#26262b" stroke-width="2.3" stroke-linecap="round" stroke-linejoin="round"/><g fill="none" stroke="#26262b" stroke-width="2.2" stroke-linecap="round" stroke-linejoin="round"><rect x="487.4" y="206.4" width="26.4" height="24.8" rx="4.2"/><line x1="487.4" y1="214.5" x2="513.8" y2="214.5"/><line x1="493" y1="204.6" x2="493" y2="210"/><line x1="508.2" y1="204.6" x2="508.2" y2="210"/><rect x="493" y="220.8" width="5.4" height="5.4" rx="0.6"/></g><path d="M1420.2 217 L1425.6 222.6 L1431 217" fill="none" stroke="#8a8a8e" stroke-width="2.3" stroke-linecap="round" stroke-linejoin="round"/><g fill="none" stroke="#26262b" stroke-width="2.2" stroke-linecap="round" stroke-linejoin="round"><path d="M1497.3 206.4 L1520.2 206.4 L1512.4 216.6 L1512.4 225.4 L1504.7 228.6 L1504.7 216.6 Z"/><path d="M1516.7 220.6 L1524.6 220.6 M1520.7 216.6 L1520.7 224.6"/></g><g fill="none" stroke="#26262b" stroke-width="2.2" stroke-linecap="round" stroke-linejoin="round" transform="translate(1708.4 218) rotate(-45)"><path d="M-17.5 0 L-12.5 -4.6 L13.3 -4.6 A4.6 4.6 0 0 1 13.3 4.6 L-12.5 4.6 Z"/><line x1="-12.5" y1="-4.6" x2="-12.5" y2="4.6"/><line x1="9.6" y1="-4.6" x2="9.6" y2="4.6"/></g><g fill="none" stroke="#26262b" stroke-width="2.2" stroke-linecap="round" stroke-linejoin="round"><path d="M1959.6 208 L1959.6 220.4 M1953.6 214.6 L1959.6 220.6 L1965.6 214.6"/><line x1="1950.5" y1="226.2" x2="1968.8" y2="226.2"/></g><g fill="#a9a9ad"><circle cx="512.6" cy="362.4" r="1.65"/><circle cx="512.6" cy="368.8" r="1.65"/><circle cx="512.6" cy="375.2" r="1.65"/><circle cx="519.2" cy="362.4" r="1.65"/><circle cx="519.2" cy="368.8" r="1.65"/><circle cx="519.2" cy="375.2" r="1.65"/></g><g fill="none" stroke="#26262b" stroke-width="2.2" stroke-linecap="round" stroke-linejoin="round"><line x1="626.4" y1="355.8" x2="626.4" y2="359.2"/><line x1="619.5" y1="358.6" x2="622.1" y2="361.2"/><line x1="633.7" y1="358.5" x2="631.2" y2="361.1"/><line x1="616.6" y1="365.3" x2="620.2" y2="365.3"/><path d="M619 372.9 L619 377.3 M615.1 376 L619 377.3 L622.9 376 M616.3 381.2 L619 377.3 L621.8 381.2"/><path d="M626.8 365.6 L641.6 370.2 L634.4 372.7 L631.4 380.4 Z"/></g><g fill="#26262b"><circle cx="805.5" cy="369.6" r="2.4"/><circle cx="813.6" cy="369.6" r="2.4"/><circle cx="821.8" cy="369.6" r="2.4"/></g><g fill="none" stroke="#26262b" stroke-width="2.2" stroke-linecap="round" stroke-linejoin="round"><path d="M873.8 358.8 C873.8 356.3 875.4 355.1 878 355.1 C880.6 355.1 882.2 356.3 882.2 358.8"/><rect x="866.4" y="359.2" width="23.6" height="5" rx="2.2"/><path d="M869.4 364.2 L869.4 376.6 C869.4 378.4 870.6 379.6 872.4 379.6 L883.9 379.6 C885.7 379.6 886.9 378.4 886.9 376.6 L886.9 364.2"/><line x1="875" y1="368.6" x2="875" y2="375.2"/><line x1="881.3" y1="368.6" x2="881.3" y2="375.2"/></g><path d="M562.3 432.8 L580.5 432.8 M571.4 423.9 L571.4 441.7" stroke="#26262b" stroke-width="2.2" stroke-linecap="round"/><path d="M1976.8 305 L1982.6 299 L1988.4 305" fill="none" stroke="#26262b" stroke-width="2.6" stroke-linecap="round" stroke-linejoin="round"/><path d="M1976.8 503 L1982.6 509 L1988.4 503" fill="none" stroke="#26262b" stroke-width="2.6" stroke-linecap="round" stroke-linejoin="round"/><g fill="none" stroke="#26262b" stroke-width="2.2" stroke-linecap="round" stroke-linejoin="round"><path d="M513.7 650 L513.7 660.4 M508.6 655.6 L513.7 660.6 L518.8 655.6"/><path d="M513.7 676.8 L513.7 666 M508.6 670.8 L513.7 665.8 L518.8 670.8"/></g><g transform="translate(554 716.3)"><circle cx="19" cy="19" r="19" fill="#addef8"/><circle cx="8.5" cy="13.1" r="2.2" fill="#2b2b30"/><circle cx="29.4" cy="13.1" r="2.2" fill="#2b2b30"/><path d="M3.1 21.1 L11.3 21.1 L18.9 13.8 L26.1 21.1 L34.7 21.1" fill="none" stroke="#fff" stroke-width="2"/><path d="M16.4 23.8 C16.8 28.2 19.4 30.6 23.6 31" fill="none" stroke="#2b2b30" stroke-width="2" stroke-linecap="round"/></g><path d="M510.6 727.7 L516.8 733.5 L510.6 739.3" fill="none" stroke="#26262b" stroke-width="2.4" stroke-linecap="round" stroke-linejoin="round"/><g fill="#26262b"><circle cx="1861.2" cy="734.5" r="2.2"/><circle cx="1869.8" cy="734.5" r="2.2"/><circle cx="1878.4" cy="734.5" r="2.2"/></g><g transform="translate(554 792.75)"><circle cx="19" cy="19" r="19" fill="#addef8"/><circle cx="8.5" cy="13.1" r="2.2" fill="#2b2b30"/><circle cx="29.4" cy="13.1" r="2.2" fill="#2b2b30"/><path d="M3.1 21.1 L11.3 21.1 L18.9 13.8 L26.1 21.1 L34.7 21.1" fill="none" stroke="#fff" stroke-width="2"/><path d="M16.4 23.8 C16.8 28.2 19.4 30.6 23.6 31" fill="none" stroke="#2b2b30" stroke-width="2" stroke-linecap="round"/></g><path d="M510.6 804.15 L516.8 809.95 L510.6 815.75" fill="none" stroke="#26262b" stroke-width="2.4" stroke-linecap="round" stroke-linejoin="round"/><g fill="#26262b"><circle cx="1861.2" cy="810.95" r="2.2"/><circle cx="1869.8" cy="810.95" r="2.2"/><circle cx="1878.4" cy="810.95" r="2.2"/></g><g transform="translate(554 869.65)"><circle cx="19" cy="19" r="19" fill="#d3a6fb"/><circle cx="10.6" cy="10.7" r="2.1" fill="#2b2b30"/><circle cx="27.4" cy="16.8" r="2.1" fill="#2b2b30"/><path d="M7.6 20.4 C12.6 20.4 15.4 17.8 15.4 13.6 C15.4 10.6 16.9 9.1 19 9.1 C21.1 9.1 22.4 10.6 22.4 13.4 L22.4 20.8 C22.4 25.4 25 28.2 30.2 28.6" fill="none" stroke="#fff" stroke-width="2"/><path d="M12.6 28.1 L18.4 28.1 C18.2 29.9 17 30.9 15.5 30.9 C14 30.9 12.8 29.9 12.6 28.1 Z" fill="#2b2b30"/></g><path d="M510.6 881.05 L516.8 886.85 L510.6 892.65" fill="none" stroke="#26262b" stroke-width="2.4" stroke-linecap="round" stroke-linejoin="round"/><g fill="#26262b"><circle cx="1861.2" cy="887.85" r="2.2"/><circle cx="1869.8" cy="887.85" r="2.2"/><circle cx="1878.4" cy="887.85" r="2.2"/></g><g transform="translate(554 946.55)"><circle cx="19" cy="19" r="19" fill="#d3a6fb"/><circle cx="10.6" cy="10.7" r="2.1" fill="#2b2b30"/><circle cx="27.4" cy="16.8" r="2.1" fill="#2b2b30"/><path d="M7.6 20.4 C12.6 20.4 15.4 17.8 15.4 13.6 C15.4 10.6 16.9 9.1 19 9.1 C21.1 9.1 22.4 10.6 22.4 13.4 L22.4 20.8 C22.4 25.4 25 28.2 30.2 28.6" fill="none" stroke="#fff" stroke-width="2"/><path d="M12.6 28.1 L18.4 28.1 C18.2 29.9 17 30.9 15.5 30.9 C14 30.9 12.8 29.9 12.6 28.1 Z" fill="#2b2b30"/></g><path d="M510.6 957.95 L516.8 963.75 L510.6 969.55" fill="none" stroke="#26262b" stroke-width="2.4" stroke-linecap="round" stroke-linejoin="round"/><g fill="#26262b"><circle cx="1861.2" cy="964.75" r="2.2"/><circle cx="1869.8" cy="964.75" r="2.2"/><circle cx="1878.4" cy="964.75" r="2.2"/></g><g transform="translate(554 1023.45)"><circle cx="19" cy="19" r="19" fill="#d3a6fb"/><circle cx="10.6" cy="10.7" r="2.1" fill="#2b2b30"/><circle cx="27.4" cy="16.8" r="2.1" fill="#2b2b30"/><path d="M7.6 20.4 C12.6 20.4 15.4 17.8 15.4 13.6 C15.4 10.6 16.9 9.1 19 9.1 C21.1 9.1 22.4 10.6 22.4 13.4 L22.4 20.8 C22.4 25.4 25 28.2 30.2 28.6" fill="none" stroke="#fff" stroke-width="2"/><path d="M12.6 28.1 L18.4 28.1 C18.2 29.9 17 30.9 15.5 30.9 C14 30.9 12.8 29.9 12.6 28.1 Z" fill="#2b2b30"/></g><path d="M510.6 1034.85 L516.8 1040.65 L510.6 1046.45" fill="none" stroke="#26262b" stroke-width="2.4" stroke-linecap="round" stroke-linejoin="round"/><g fill="#26262b"><circle cx="1861.2" cy="1041.65" r="2.2"/><circle cx="1869.8" cy="1041.65" r="2.2"/><circle cx="1878.4" cy="1041.65" r="2.2"/></g><g transform="translate(554 1100.35)"><circle cx="19" cy="19" r="19" fill="#74bafc"/><circle cx="9.8" cy="16.5" r="2.1" fill="#2b2b30"/><circle cx="27.6" cy="16.5" r="2.1" fill="#2b2b30"/><path d="M3.2 25 L13.2 25 M24 25 L26.4 25 M28.2 25 L31 25 M32.6 25 L35 25" fill="none" stroke="#fff" stroke-width="2"/><path d="M15.6 25 L22.6 25" fill="none" stroke="#2b2b30" stroke-width="2" stroke-linecap="round"/></g><path d="M510.6 1111.75 L516.8 1117.55 L510.6 1123.35" fill="none" stroke="#26262b" stroke-width="2.4" stroke-linecap="round" stroke-linejoin="round"/><g fill="#26262b"><circle cx="1861.2" cy="1118.55" r="2.2"/><circle cx="1869.8" cy="1118.55" r="2.2"/><circle cx="1878.4" cy="1118.55" r="2.2"/></g><g transform="translate(554 1177.25)"><circle cx="19" cy="19" r="19" fill="#fe9b9b"/><circle cx="27.6" cy="12.7" r="2" fill="#2b2b30"/><circle cx="8.6" cy="21.2" r="2" fill="#2b2b30"/><circle cx="23.4" cy="27.5" r="2.2" fill="none" stroke="#2b2b30" stroke-width="1.9"/><path d="M6.2 26.8 L10.6 26.8 C12.9 26.8 13.9 25.3 13.9 22.6 L13.9 10.8 C13.9 7.3 15.6 5.6 18.2 5.6 C20.8 5.6 22.4 7.3 22.4 10.8 L22.4 14.4 C22.4 16.8 23.6 18 25.8 18 L32.2 18" fill="none" stroke="#fff" stroke-width="2"/></g><path d="M510.6 1188.65 L516.8 1194.45 L510.6 1200.25" fill="none" stroke="#26262b" stroke-width="2.4" stroke-linecap="round" stroke-linejoin="round"/><g fill="#26262b"><circle cx="1861.2" cy="1195.45" r="2.2"/><circle cx="1869.8" cy="1195.45" r="2.2"/><circle cx="1878.4" cy="1195.45" r="2.2"/></g><g transform="translate(554 1254.15)"><circle cx="19" cy="19" r="19" fill="#fe9b9b"/><circle cx="27.6" cy="12.7" r="2" fill="#2b2b30"/><circle cx="8.6" cy="21.2" r="2" fill="#2b2b30"/><circle cx="23.4" cy="27.5" r="2.2" fill="none" stroke="#2b2b30" stroke-width="1.9"/><path d="M6.2 26.8 L10.6 26.8 C12.9 26.8 13.9 25.3 13.9 22.6 L13.9 10.8 C13.9 7.3 15.6 5.6 18.2 5.6 C20.8 5.6 22.4 7.3 22.4 10.8 L22.4 14.4 C22.4 16.8 23.6 18 25.8 18 L32.2 18" fill="none" stroke="#fff" stroke-width="2"/></g><path d="M510.6 1265.55 L516.8 1271.35 L510.6 1277.15" fill="none" stroke="#26262b" stroke-width="2.4" stroke-linecap="round" stroke-linejoin="round"/><g fill="#26262b"><circle cx="1861.2" cy="1272.35" r="2.2"/><circle cx="1869.8" cy="1272.35" r="2.2"/><circle cx="1878.4" cy="1272.35" r="2.2"/></g><g transform="translate(554 1331.05)"><circle cx="19" cy="19" r="19" fill="#fe9b9b"/><circle cx="27.6" cy="12.7" r="2" fill="#2b2b30"/><circle cx="8.6" cy="21.2" r="2" fill="#2b2b30"/><circle cx="23.4" cy="27.5" r="2.2" fill="none" stroke="#2b2b30" stroke-width="1.9"/><path d="M6.2 26.8 L10.6 26.8 C12.9 26.8 13.9 25.3 13.9 22.6 L13.9 10.8 C13.9 7.3 15.6 5.6 18.2 5.6 C20.8 5.6 22.4 7.3 22.4 10.8 L22.4 14.4 C22.4 16.8 23.6 18 25.8 18 L32.2 18" fill="none" stroke="#fff" stroke-width="2"/></g><path d="M510.6 1342.45 L516.8 1348.25 L510.6 1354.05" fill="none" stroke="#26262b" stroke-width="2.4" stroke-linecap="round" stroke-linejoin="round"/><g fill="#26262b"><circle cx="1861.2" cy="1349.25" r="2.2"/><circle cx="1869.8" cy="1349.25" r="2.2"/><circle cx="1878.4" cy="1349.25" r="2.2"/></g><g transform="translate(554 1407.95)"><circle cx="19" cy="19" r="19" fill="#c6fca1"/><circle cx="21.8" cy="7" r="2.1" fill="#2b2b30"/><circle cx="7.2" cy="21.8" r="2.1" fill="#2b2b30"/><path d="M9.3 31.1 L15.1 25.6 L15.1 14.8 L25 14.8 L31.1 8.5" fill="none" stroke="#fff" stroke-width="1.9"/><path d="M21.2 24.2 C23.4 26.4 27.8 26.6 30.2 24.2" fill="none" stroke="#2b2b30" stroke-width="2" stroke-linecap="round"/></g><path d="M510.6 1419.35 L516.8 1425.15 L510.6 1430.95" fill="none" stroke="#26262b" stroke-width="2.4" stroke-linecap="round" stroke-linejoin="round"/><g fill="#26262b"><circle cx="1861.2" cy="1426.15" r="2.2"/><circle cx="1869.8" cy="1426.15" r="2.2"/><circle cx="1878.4" cy="1426.15" r="2.2"/></g><g transform="translate(554 1484.85)"><circle cx="19" cy="19" r="19" fill="#c6fca1"/><circle cx="21.8" cy="7" r="2.1" fill="#2b2b30"/><circle cx="7.2" cy="21.8" r="2.1" fill="#2b2b30"/><path d="M9.3 31.1 L15.1 25.6 L15.1 14.8 L25 14.8 L31.1 8.5" fill="none" stroke="#fff" stroke-width="1.9"/><path d="M21.2 24.2 C23.4 26.4 27.8 26.6 30.2 24.2" fill="none" stroke="#2b2b30" stroke-width="2" stroke-linecap="round"/></g><path d="M510.6 1496.25 L516.8 1502.05 L510.6 1507.85" fill="none" stroke="#26262b" stroke-width="2.4" stroke-linecap="round" stroke-linejoin="round"/><g fill="#26262b"><circle cx="1861.2" cy="1503.05" r="2.2"/><circle cx="1869.8" cy="1503.05" r="2.2"/><circle cx="1878.4" cy="1503.05" r="2.2"/></g><path d="M626.4 655 L778.6 655 Q786 655 786 662.4 L786 697 Q786 704.4 778.6 704.4 L710.4 704.4 L703.6 712.4 Q702 714 700.4 712.4 L693.6 704.4 L626.4 704.4 Q619 704.4 619 697 L619 662.4 Q619 655 626.4 655 Z" fill="#2b2a30"/></svg>
<div class="t" style="left:633.1px;top:669.92px;font-size:19px;color:#ffffff;letter-spacing:0.447px;-webkit-text-stroke:0.55px #ffffff;">product_viewed</div>
</div><svg width="2076" height="1504" style="position:absolute;left:0;top:0"><path d="M2071 0 L2076 0 L2076 5 Z" fill="#1e1e24"/><path d="M2076 1500 L2076 1504 L2072 1504 Z" fill="#1e1e24"/></svg></body></html>
